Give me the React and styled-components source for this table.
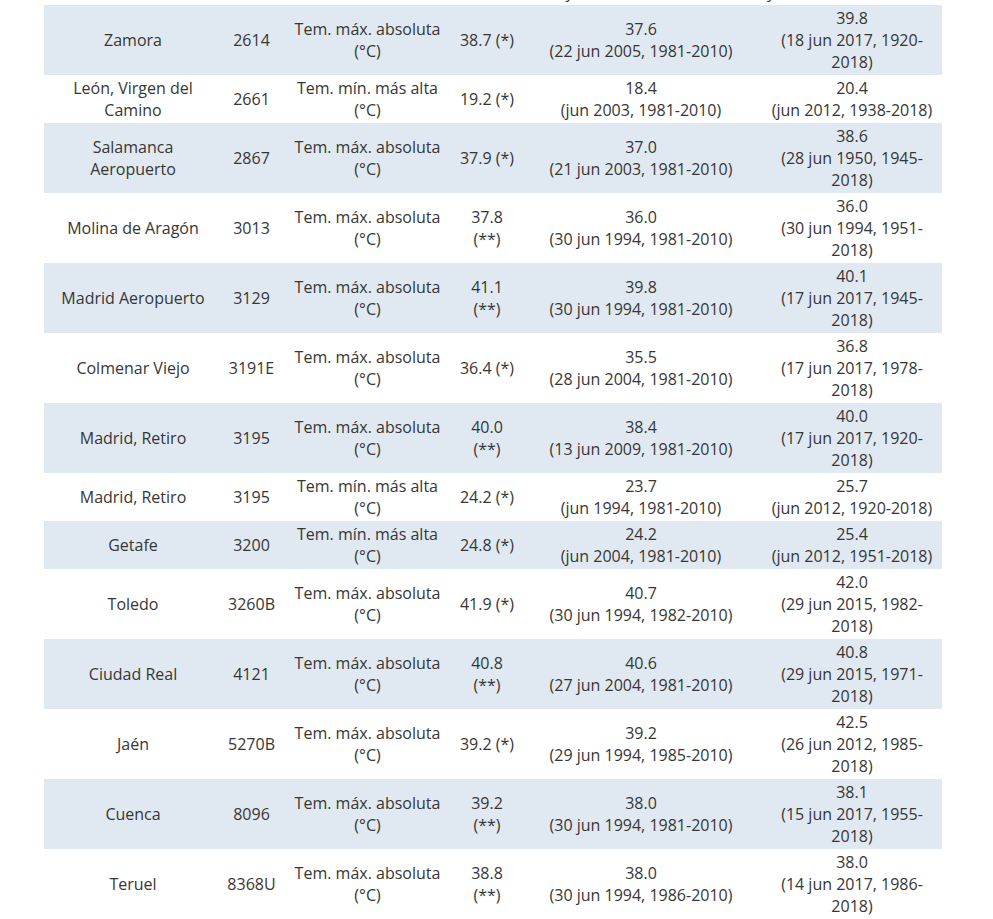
import React from 'react';
import styled, { createGlobalStyle } from 'styled-components';

const rows = [
    { name: 'Zamora', code: '2614', variable: 'Tem. máx. absoluta (°C)', value: '38.7 (*)', prev: ['37.6', '(22 jun 2005, 1981-2010)'], record: ['39.8', '(18 jun 2017, 1920-2018)'] },
    { name: 'León, Virgen del Camino', code: '2661', variable: 'Tem. mín. más alta (°C)', value: '19.2 (*)', prev: ['18.4', '(jun 2003, 1981-2010)'], record: ['20.4', '(jun 2012, 1938-2018)'] },
    { name: 'Salamanca Aeropuerto', code: '2867', variable: 'Tem. máx. absoluta (°C)', value: '37.9 (*)', prev: ['37.0', '(21 jun 2003, 1981-2010)'], record: ['38.6', '(28 jun 1950, 1945-2018)'] },
    { name: 'Molina de Aragón', code: '3013', variable: 'Tem. máx. absoluta (°C)', value: '37.8 (**)', prev: ['36.0', '(30 jun 1994, 1981-2010)'], record: ['36.0', '(30 jun 1994, 1951-2018)'] },
    { name: 'Madrid Aeropuerto', code: '3129', variable: 'Tem. máx. absoluta (°C)', value: '41.1 (**)', prev: ['39.8', '(30 jun 1994, 1981-2010)'], record: ['40.1', '(17 jun 2017, 1945-2018)'] },
    { name: 'Colmenar Viejo', code: '3191E', variable: 'Tem. máx. absoluta (°C)', value: '36.4 (*)', prev: ['35.5', '(28 jun 2004, 1981-2010)'], record: ['36.8', '(17 jun 2017, 1978-2018)'] },
    { name: 'Madrid, Retiro', code: '3195', variable: 'Tem. máx. absoluta (°C)', value: '40.0 (**)', prev: ['38.4', '(13 jun 2009, 1981-2010)'], record: ['40.0', '(17 jun 2017, 1920-2018)'] },
    { name: 'Madrid, Retiro', code: '3195', variable: 'Tem. mín. más alta (°C)', value: '24.2 (*)', prev: ['23.7', '(jun 1994, 1981-2010)'], record: ['25.7', '(jun 2012, 1920-2018)'] },
    { name: 'Getafe', code: '3200', variable: 'Tem. mín. más alta (°C)', value: '24.8 (*)', prev: ['24.2', '(jun 2004, 1981-2010)'], record: ['25.4', '(jun 2012, 1951-2018)'] },
    { name: 'Toledo', code: '3260B', variable: 'Tem. máx. absoluta (°C)', value: '41.9 (*)', prev: ['40.7', '(30 jun 1994, 1982-2010)'], record: ['42.0', '(29 jun 2015, 1982-2018)'] },
    { name: 'Ciudad Real', code: '4121', variable: 'Tem. máx. absoluta (°C)', value: '40.8 (**)', prev: ['40.6', '(27 jun 2004, 1981-2010)'], record: ['40.8', '(29 jun 2015, 1971-2018)'] },
    { name: 'Jaén', code: '5270B', variable: 'Tem. máx. absoluta (°C)', value: '39.2 (*)', prev: ['39.2', '(29 jun 1994, 1985-2010)'], record: ['42.5', '(26 jun 2012, 1985-2018)'] },
    { name: 'Cuenca', code: '8096', variable: 'Tem. máx. absoluta (°C)', value: '39.2 (**)', prev: ['38.0', '(30 jun 1994, 1981-2010)'], record: ['38.1', '(15 jun 2017, 1955-2018)'] },
    { name: 'Teruel', code: '8368U', variable: 'Tem. máx. absoluta (°C)', value: '38.8 (**)', prev: ['38.0', '(30 jun 1994, 1986-2010)'], record: ['38.0', '(14 jun 2017, 1986-2018)'] },
];

const columns = [178, 59, 173, 66, 242, 180];

const App = () => {
    return (
        <>
            <GlobalStyle />
            <Page>
                <Viewport>
                    <Table>
                        <colgroup>
                            {columns.map((w, i) => <col key={i} style={{ width: w }} />)}
                        </colgroup>
                        <thead>
                            {/* header row scrolled out of view, only the last line's descenders peek in */}
                            <HeadRow>
                                <HeadCell />
                                <HeadCell />
                                <HeadCell />
                                <HeadCell />
                                <HeadCell>Efeméride anterior del mes<br />y serie de referencia</HeadCell>
                                <HeadCell>Efeméride anterior absoluta<br />y serie total hasta 2018</HeadCell>
                            </HeadRow>
                        </thead>
                        <tbody>
                            {rows.map((r, i) => (
                                <Row key={i} $striped={i % 2 === 0}>
                                    <Cell>{r.name}</Cell>
                                    <Cell>{r.code}</Cell>
                                    <Cell>{r.variable}</Cell>
                                    <Cell>{r.value}</Cell>
                                    <Cell>{r.prev[0]}<br />{r.prev[1]}</Cell>
                                    <Cell>{r.record[0]}<br />{r.record[1]}</Cell>
                                </Row>
                            ))}
                        </tbody>
                    </Table>
                </Viewport>
            </Page>
        </>
    );
};

const GlobalStyle = createGlobalStyle`
    html, body {
        margin: 0;
        padding: 0;
        background: #ffffff;
    }
    body {
        font-family: "Open Sans", "Liberation Sans", sans-serif;
        color: #363636;
    }
`;

const Page = styled.div`
    padding-left: 44px;
    height: 919px;
`;

const Viewport = styled.div`
    width: 898px;
    height: 919px;
    overflow: hidden;
`;

const Table = styled.table`
    width: 898px;
    margin-top: -43px;
    border-collapse: collapse;
    table-layout: fixed;
    font-size: 16px;
    line-height: 22px;
`;

const HeadRow = styled.tr`
    background: #ffffff;
`;

const HeadCell = styled.th`
    padding: 2px 5px;
    font-weight: 400;
    white-space: nowrap;
    text-align: center;
    vertical-align: middle;
`;

const Row = styled.tr`
    background: ${(p) => (p.$striped ? '#e0e9f1' : '#ffffff')};
`;

const Cell = styled.td`
    padding: 2px 5px;
    text-align: center;
    vertical-align: middle;
`;

export default App;
